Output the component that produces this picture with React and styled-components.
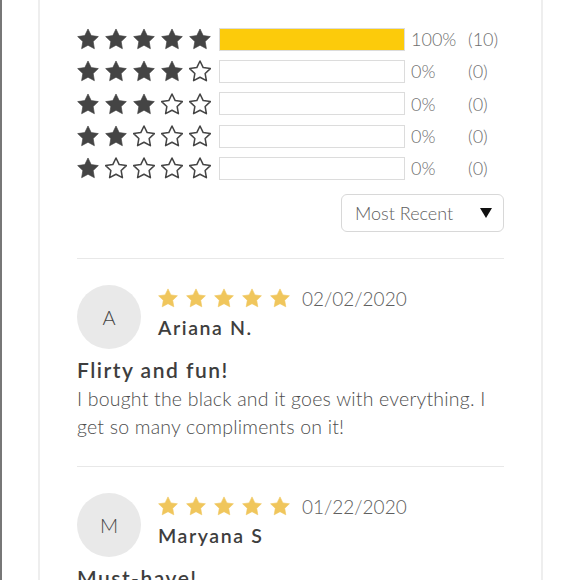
import React from "react";
import styled, { createGlobalStyle } from "styled-components";

const GlobalStyle = createGlobalStyle`
    html, body {
        margin: 0;
        padding: 0;
        background: #fff;
    }
    body {
        font-family: Lato, "Open Sans", "Liberation Sans", sans-serif;
        overflow: hidden;
    }
`;

const histogram = [
    { stars: 5, percent: 100, count: 10 },
    { stars: 4, percent: 0, count: 0 },
    { stars: 3, percent: 0, count: 0 },
    { stars: 2, percent: 0, count: 0 },
    { stars: 1, percent: 0, count: 0 },
];

const reviews = [
    {
        initial: "A",
        name: "Ariana N.",
        date: "02/02/2020",
        title: "Flirty and fun!",
        body: "I bought the black and it goes with everything. I get so many compliments on it!",
    },
    {
        initial: "M",
        name: "Maryana S",
        date: "01/22/2020",
        title: "Must-have!",
        body: "Fits perfectly and looks great dressed up or down.",
    },
];

const STAR_POINTS = "12,2.6 14.9,8.6 21.4,9.5 16.7,14 17.8,20.5 12,17.4 6.2,20.5 7.3,14 2.6,9.5 9.1,8.6";

function Star({ filled, color, size }) {
    return (
        <StarSvg width={size} height={size} viewBox="2 2 20 19.4">
            <polygon
                points={STAR_POINTS}
                fill={filled ? color : "none"}
                stroke={color}
                strokeWidth={filled ? 0.6 : 1.4}
                strokeLinejoin="round"
            />
        </StarSvg>
    );
}

function StarRow({ value, color, size, gap }) {
    return (
        <Stars $gap={gap}>
            {[1, 2, 3, 4, 5].map((n) => (
                <Star key={n} filled={n <= value} color={color} size={size} />
            ))}
        </Stars>
    );
}

export default function App() {
    return (
        <>
            <GlobalStyle />
            <Page>
                <Panel>
                    <Histogram>
                        {histogram.map((row) => (
                            <HistRow key={row.stars}>
                                <StarRow value={row.stars} color="#444" size={22} gap={6} />
                                <Bar>
                                    <BarFill style={{ width: `${row.percent}%` }} />
                                </Bar>
                                <Percent>{row.percent}%</Percent>
                                <Count>({row.count})</Count>
                            </HistRow>
                        ))}
                    </Histogram>

                    <SortWrap>
                        <SortBox>
                            <span>Most Recent</span>
                            <Caret />
                        </SortBox>
                    </SortWrap>

                    {reviews.map((r) => (
                        <Review key={r.name}>
                            <ReviewHead>
                                <Avatar>{r.initial}</Avatar>
                                <Info>
                                    <StarLine>
                                        <StarRow value={5} color="#f0c65c" size={20} gap={8} />
                                        <DateText>{r.date}</DateText>
                                    </StarLine>
                                    <Name>{r.name}</Name>
                                </Info>
                            </ReviewHead>
                            <Title>{r.title}</Title>
                            <Body>{r.body}</Body>
                        </Review>
                    ))}
                </Panel>
            </Page>
        </>
    );
}

const Page = styled.div`
    min-height: 100vh;
    border-left: 2px solid #777;
    display: flex;
`;

const Panel = styled.div`
    margin-left: 36px;
    width: 427px;
    padding: 0 37px;
    border-left: 2px solid #eeeeee;
    border-right: 2px solid #eeeeee;
    color: #555;
`;

const Histogram = styled.div`
    padding-top: 23px;
    display: flex;
    flex-direction: column;
`;

const HistRow = styled.div`
    height: 32.3px;
    display: flex;
    align-items: center;
`;

const Stars = styled.div`
    display: flex;
    align-items: center;
    gap: ${(p) => p.$gap}px;
`;

const StarSvg = styled.svg`
    display: block;
    flex-shrink: 0;
`;

const Bar = styled.div`
    margin-left: 8px;
    width: 184px;
    height: 21px;
    border: 1px solid #dcdcdc;
    background: #fff;
`;

const BarFill = styled.div`
    height: 100%;
    background: #fccb0b;
`;

const Percent = styled.span`
    width: 57px;
    margin-left: 6px;
    font-size: 18px;
    font-weight: 300;
    color: #6e6e6e;
`;

const Count = styled.span`
    font-size: 18px;
    font-weight: 300;
    color: #6e6e6e;
`;

const SortWrap = styled.div`
    display: flex;
    justify-content: flex-end;
    margin-top: 10px;
    padding-bottom: 26px;
    border-bottom: 1px solid #e8e8e8;
`;

const SortBox = styled.div`
    height: 36px;
    width: 137px;
    box-sizing: content-box;
    border: 1px solid #d8d8d8;
    border-radius: 6px;
    display: flex;
    align-items: center;
    justify-content: space-between;
    padding: 0 11px 0 13px;
    font-size: 18px;
    font-weight: 300;
    color: #5e5e5e;
`;

const Caret = styled.span`
    width: 0;
    height: 0;
    border-left: 6px solid transparent;
    border-right: 6px solid transparent;
    border-top: 10px solid #111;
`;

const Review = styled.div`
    padding: 26px 0 25px;
    border-bottom: 1px solid #e8e8e8;
`;

const ReviewHead = styled.div`
    display: flex;
    align-items: flex-start;
`;

const Avatar = styled.div`
    width: 64px;
    height: 64px;
    border-radius: 50%;
    background: #e9e9e9;
    display: flex;
    align-items: center;
    justify-content: center;
    font-size: 20px;
    font-weight: 300;
    color: #444;
    flex-shrink: 0;
`;

const Info = styled.div`
    margin-left: 17px;
    padding-top: 3px;
    display: flex;
    flex-direction: column;
`;

const StarLine = styled.div`
    display: flex;
    align-items: center;
    height: 20px;
    gap: 12px;
`;

const DateText = styled.span`
    font-size: 19px;
    font-weight: 300;
    color: #5e5e5e;
`;

const Name = styled.div`
    margin-top: 8px;
    line-height: 24px;
    font-size: 19.5px;
    font-weight: 600;
    letter-spacing: 1.6px;
    color: #3e3e3e;
`;

const Title = styled.div`
    margin-top: 9px;
    font-size: 21px;
    line-height: 24px;
    font-weight: 600;
    letter-spacing: 1.5px;
    color: #3e3e3e;
`;

const Body = styled.p`
    margin: 3px 0 0;
    font-size: 19.5px;
    line-height: 28px;
    font-weight: 300;
    letter-spacing: 0.2px;
    color: #4e4e4e;
`;
